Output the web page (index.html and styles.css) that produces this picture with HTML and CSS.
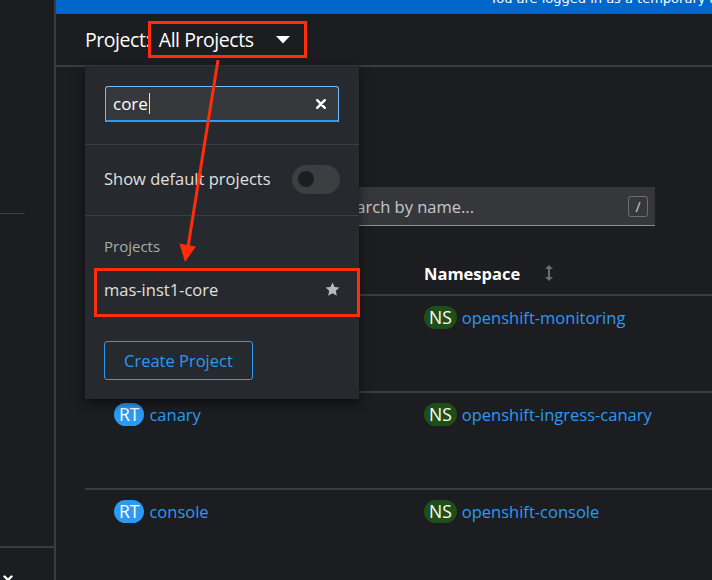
FILE: index.html
```html
<!DOCTYPE html>
<html lang="en">
<head>
<meta charset="utf-8">
<title>Routes</title>
<link rel="stylesheet" href="styles.css">
</head>
<body>
<div class="app">
  <aside class="sidebar">
    <div class="side-sep"></div>
    <div class="side-fill"></div>
    <div class="side-foot">
      <svg class="side-x" viewBox="0 0 10 10" width="10" height="10"><path d="M1.5 1.5 L8.5 8.5 M8.5 1.5 L1.5 8.5" stroke="#fff" stroke-width="2.4" stroke-linecap="round"/></svg>
    </div>
  </aside>
  <div class="main">
    <div class="banner"><span class="banner-text">You are logged in as a temporary administrative user. Update the cluster OAuth configuration to allow others to log in.</span></div>
    <header class="projbar">
      <div class="proj-toggle">
        <span class="proj-label"><span>Project:</span> <span class="proj-name">All Projects</span></span>
        <svg class="caret" viewBox="0 0 14 8" width="14" height="8"><polygon points="0,0 14,0 7,7.5" fill="#fff"/></svg>
      </div>
    </header>
    <section class="content">
      <div class="title"></div>
      <div class="toolbar">
        <div class="filter"></div>
        <div class="search">
          <span class="ph">Search by name...</span>
          <span class="kbd">/</span>
        </div>
      </div>
      <div class="table">
        <div class="row head">
          <div class="cell c1"></div>
          <div class="cell c2">Namespace
            <svg class="sort" viewBox="0 0 10 18" width="10" height="18"><path d="M5 2 V16" stroke="#6a6e73" stroke-width="2"/><polygon points="1,5 5,1 9,5" fill="#6a6e73"/><polygon points="1,13 5,17 9,13" fill="#6a6e73"/></svg>
          </div>
        </div>
        <div class="row">
          <div class="cell c1"></div>
          <div class="cell c2"><span class="badge ns">NS</span><a class="link">openshift-monitoring</a></div>
        </div>
        <div class="row">
          <div class="cell c1"><span class="badge rt">RT</span><a class="link">canary</a></div>
          <div class="cell c2"><span class="badge ns">NS</span><a class="link">openshift-ingress-canary</a></div>
        </div>
        <div class="row">
          <div class="cell c1"><span class="badge rt">RT</span><a class="link">console</a></div>
          <div class="cell c2"><span class="badge ns">NS</span><a class="link">openshift-console</a></div>
        </div>
      </div>
    </section>

    <div class="menu">
      <div class="m-search">
        <div class="m-input">
          <span class="m-value">core</span>
          <svg class="clear" viewBox="0 0 10 10" width="10" height="10"><path d="M1.2 1.2 L8.8 8.8 M8.8 1.2 L1.2 8.8" stroke="#fff" stroke-width="2.4" stroke-linecap="round"/></svg>
        </div>
      </div>
      <div class="m-toggle">
        <span>Show default projects</span>
        <span class="switch"><span class="knob"></span></span>
      </div>
      <div class="m-group">
        <div class="m-label">Projects</div>
        <div class="m-item">
          <span>mas-inst1-core</span>
          <svg class="star" viewBox="0 0 16 16" width="15" height="15"><polygon points="8,0.6 10.2,5.4 15.4,5.9 11.5,9.4 12.6,14.6 8,11.9 3.4,14.6 4.5,9.4 0.6,5.9 5.8,5.4" fill="#b8bbbe"/></svg>
        </div>
      </div>
      <div class="m-foot">
        <button class="btn-create">Create Project</button>
      </div>
    </div>
  </div>

  <div class="annot box1"></div>
  <div class="annot box2"></div>
  <svg class="arrow" viewBox="0 0 712 580" width="712" height="580">
    <line x1="218" y1="60" x2="188" y2="247" stroke="#ff2d0a" stroke-width="3"/>
    <polygon points="179.5,243.5 196,246.5 185,262" fill="#ff2d0a"/>
  </svg>
</div>
</body>
</html>
```

FILE: styles.css
```css
* { box-sizing: border-box; }
html, body { margin: 0; padding: 0; }
body {
  background: #1b1d21;
  color: #e0e0e0;
  font-family: "Open Sans", "Noto Sans", sans-serif;
  font-size: 16px;
  width: 712px;
  height: 580px;
  overflow: hidden;
}
.app {
  position: relative;
  display: flex;
  width: 712px;
  height: 580px;
  overflow: hidden;
}

/* sidebar */
.sidebar {
  width: 56px;
  flex: 0 0 56px;
  border-right: 2px solid #3a3c40;
  display: flex;
  flex-direction: column;
  background: #1b1d21;
}
.side-sep {
  flex-shrink: 0;
  margin-top: 213px;
  width: 25px;
  border-top: 1px solid #3c3f42;
}
.side-fill { flex: 1; }
.side-foot {
  flex-shrink: 0;
  height: 34px;
  border-top: 2px solid #3a3c40;
  padding: 27px 0 0 3px;
}
.side-x { display: block; }

/* main */
.main {
  position: relative;
  flex: 1;
  min-width: 0;
  display: flex;
  flex-direction: column;
}
.main > * { flex-shrink: 0; }
.banner {
  height: 14px;
  background: #0066cc;
  overflow: hidden;
  padding-left: 434px;
}
.banner-text {
  display: block;
  margin-top: -9px;
  white-space: nowrap;
  font-family: "DejaVu Sans", sans-serif;
  font-size: 13px;
  line-height: 16px;
  color: #fff;
}
.projbar {
  height: 53px;
  border-bottom: 2px solid #3a3c40;
  display: flex;
  align-items: center;
  padding-left: 29px;
}
.proj-toggle {
  display: flex;
  align-items: center;
  gap: 23px;
  color: #fff;
}
.proj-label {
  font-size: 19.5px;
  letter-spacing: -0.45px;
  word-spacing: 4px;
}
.proj-name { word-spacing: 0; }
.caret { display: block; margin-top: 1px; }

.content {
  padding-left: 29px;
}
.title {
  height: 120px;
}
.toolbar {
  display: flex;
  height: 39px;
}
.filter {
  width: 120px;
  background: #26292d;
}
.search {
  width: 450px;
  background: #36373b;
  border-bottom: 1px solid #8a8d90;
  display: flex;
  align-items: center;
  justify-content: space-between;
  padding: 0 7px 0 133px;
}
.ph {
  color: #c6c7c8;
  font-size: 16.5px;
}
.kbd {
  width: 20px;
  height: 21px;
  border: 1px solid #6a6e73;
  border-radius: 3px;
  display: flex;
  align-items: center;
  justify-content: center;
  font-size: 14px;
  color: #d2d2d2;
}

.table {
  margin-top: 26px;
}
.row {
  display: grid;
  grid-template-columns: 309px 1fr;
  height: 97px;
  border-bottom: 2px solid #3a3c40;
  padding-top: 10px;
}
.row.head {
  height: 44px;
  padding-top: 0;
  align-items: center;
}
.head .cell {
  font-weight: 700;
  font-size: 16.5px;
  color: #fff;
  display: flex;
  align-items: center;
}
.sort { margin-left: 24px; display: block; }
.cell {
  display: flex;
  align-items: flex-start;
  gap: 5px;
  padding-left: 29px;
}
.cell.c2 { padding-left: 30px; }
.head .cell.c2 { gap: 0; }
.badge {
  display: inline-flex;
  align-items: center;
  justify-content: center;
  height: 23px;
  padding: 0 5px;
  border-radius: 12px;
  color: #fff;
  font-size: 17.5px;
  line-height: 23px;
}
.badge.rt { background: #2b9af3; }
.badge.ns { background: #1e4f18; }
.link {
  color: #2b9af3;
  font-size: 16.5px;
  line-height: 23px;
}

/* dropdown menu overlay */
.menu {
  position: absolute;
  left: 29px;
  top: 66px;
  width: 274px;
  height: 333px;
  background: #26292d;
  box-shadow: 0 4px 10px rgba(0, 0, 0, 0.55);
  z-index: 5;
}
.m-search {
  padding: 20px 20px 22px 20px;
  border-bottom: 1px solid #3c3f42;
}
.m-input {
  height: 36px;
  background: #36383c;
  border: 1px solid #73bcf7;
  border-bottom: 2px solid #2b9af3;
  border-radius: 3px 3px 0 0;
  display: flex;
  align-items: center;
  padding: 0 12px 0 7px;
}
.m-value {
  color: #fff;
  font-size: 17px;
  line-height: 21px;
  padding-right: 1px;
  border-right: 1px solid #e0e0e0;
}
.clear { margin-left: auto; display: block; }
.m-toggle {
  height: 71px;
  border-bottom: 1px solid #3c3f42;
  display: flex;
  align-items: center;
  justify-content: space-between;
  padding: 0 19px 4px 19px;
  color: #e0e0e0;
  font-size: 16.5px;
}
.switch {
  width: 48px;
  height: 29px;
  border-radius: 15px;
  background: #3c3e42;
  display: flex;
  align-items: center;
  padding-left: 6px;
  margin-top: 2px;
}
.knob {
  width: 16px;
  height: 16px;
  border-radius: 50%;
  background: #1b1d21;
}
.m-group {
  padding-top: 19px;
}
.m-label {
  height: 31px;
  line-height: 22px;
  padding-left: 19px;
  color: #aaabac;
  font-size: 15px;
}
.m-item {
  height: 47px;
  display: flex;
  align-items: center;
  justify-content: space-between;
  padding: 0 19px 0 19px;
  color: #e0e0e0;
  font-size: 16.5px;
}
.m-foot {
  padding: 28px 19px 19px 19px;
}
.btn-create {
  height: 39px;
  padding: 0 19px;
  background: transparent;
  border: 1px solid #2b9af3;
  border-radius: 3px;
  color: #2b9af3;
  font-family: "Open Sans", "Noto Sans", sans-serif;
  font-size: 16.5px;
}

/* annotations */
.annot {
  position: absolute;
  border: 3px solid #ff2d0a;
  z-index: 10;
}
.box1 { left: 148px; top: 21px; width: 159px; height: 37px; }
.box2 { left: 94px; top: 268px; width: 266px; height: 49px; }
.arrow {
  position: absolute;
  left: 0;
  top: 0;
  z-index: 11;
  pointer-events: none;
}
```
